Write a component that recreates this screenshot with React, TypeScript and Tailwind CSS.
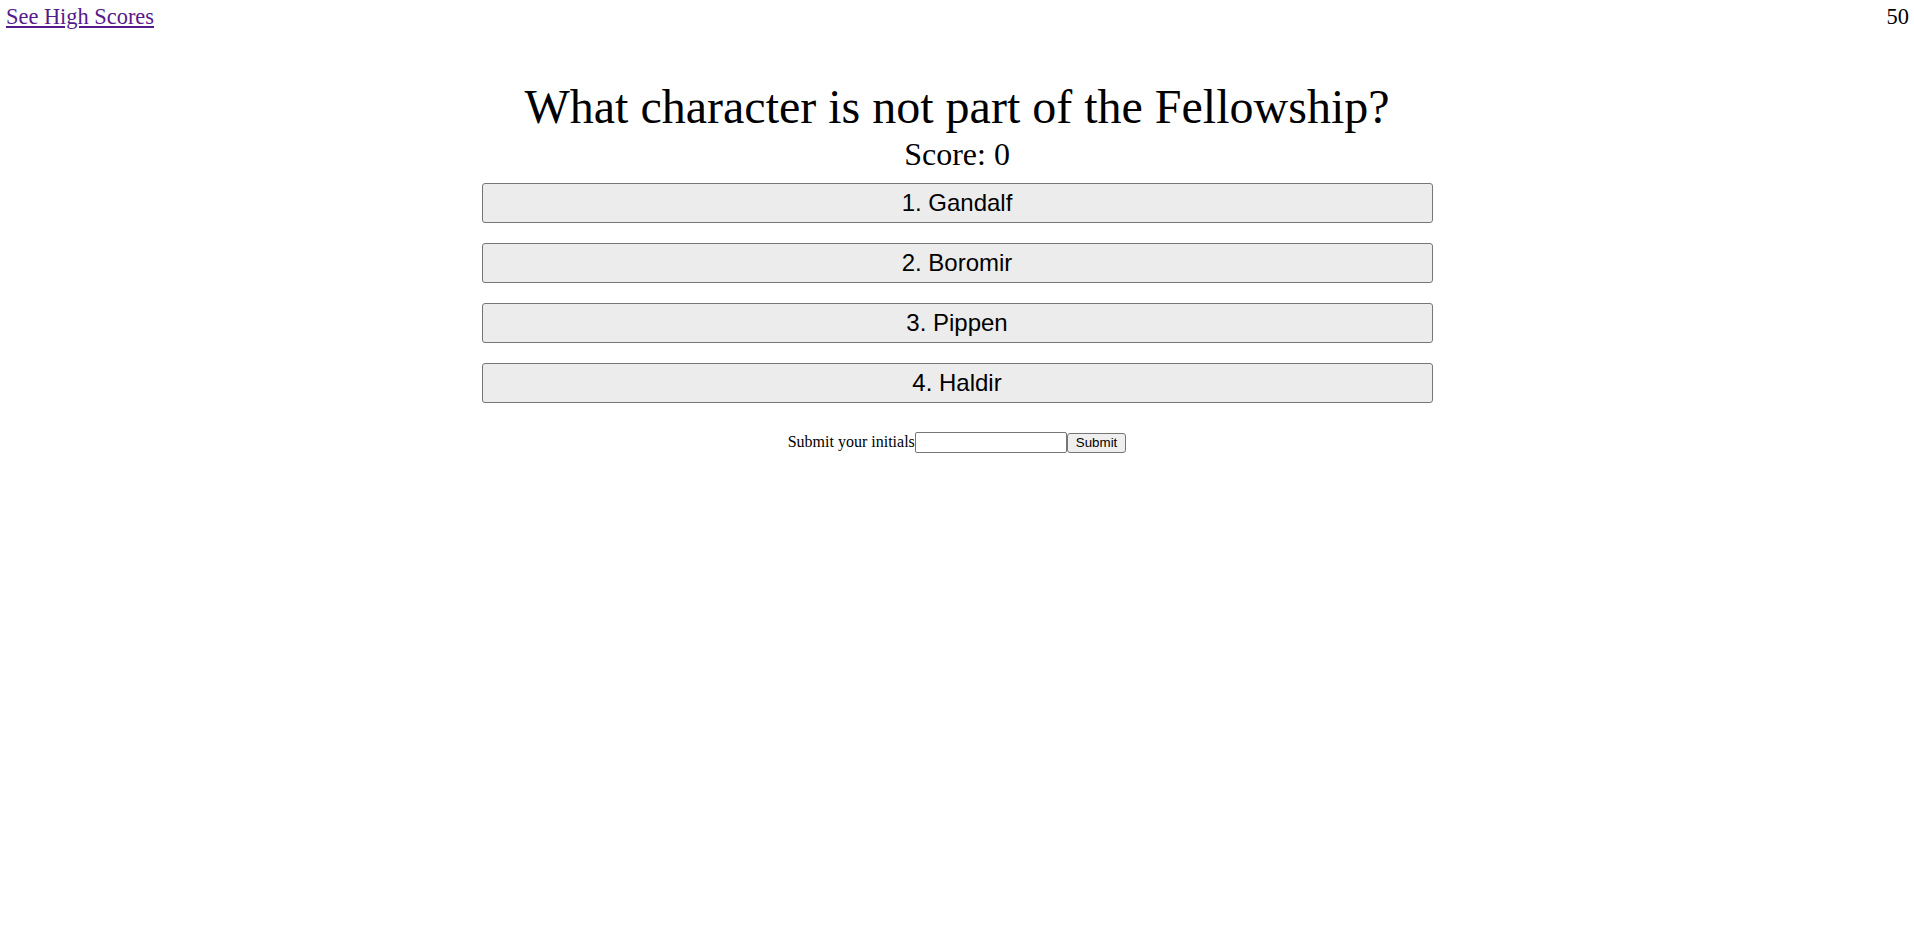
const answers = ["1. Gandalf", "2. Boromir", "3. Pippen", "4. Haldir"]

export default function App() {
  return (
    <div className="min-h-screen bg-white font-['Liberation_Serif',serif] text-black">
      {/* Top bar */}
      <header className="flex justify-between pl-[6px] pr-[5px] pt-[4px] text-[22.4px] leading-[25px]">
        <a href="#" className="text-[#551a8b] underline">
          See High Scores
        </a>
        <span>50</span>
      </header>

      {/* Quiz */}
      <main className="mx-auto mt-[50px] flex w-[951px] flex-col items-center">
        <h1 className="text-[48px] leading-[55px] whitespace-nowrap">
          What character is not part of the Fellowship?
        </h1>
        <p className="mt-[2px] text-[32px] leading-[37px]">Score: 0</p>

        <div className="mt-[10px] flex w-full flex-col gap-[20px]">
          {answers.map((a) => (
            <button
              key={a}
              className="h-[40px] w-full rounded-[3px] border border-[#767676] bg-[#ececec] font-['Liberation_Sans',sans-serif] text-[24px] leading-[28px] text-black"
            >
              {a}
            </button>
          ))}
        </div>

        <form className="mt-[29px] flex items-center" onSubmit={(e) => e.preventDefault()}>
          <label className="-mt-[2px] text-[16px] leading-[18px]">Submit your initials</label>
          <input
            type="text"
            className="h-[21px] w-[152px] rounded-[2px] border border-[#767676] bg-white px-[2px] font-['Liberation_Sans',sans-serif] text-[13px]"
          />
          <button
            type="submit"
            className="h-[20px] rounded-[3px] border border-[#767676] bg-[#efefef] px-[8px] font-['Liberation_Sans',sans-serif] text-[13.33px] leading-[16px]"
          >
            Submit
          </button>
        </form>
      </main>
    </div>
  )
}
